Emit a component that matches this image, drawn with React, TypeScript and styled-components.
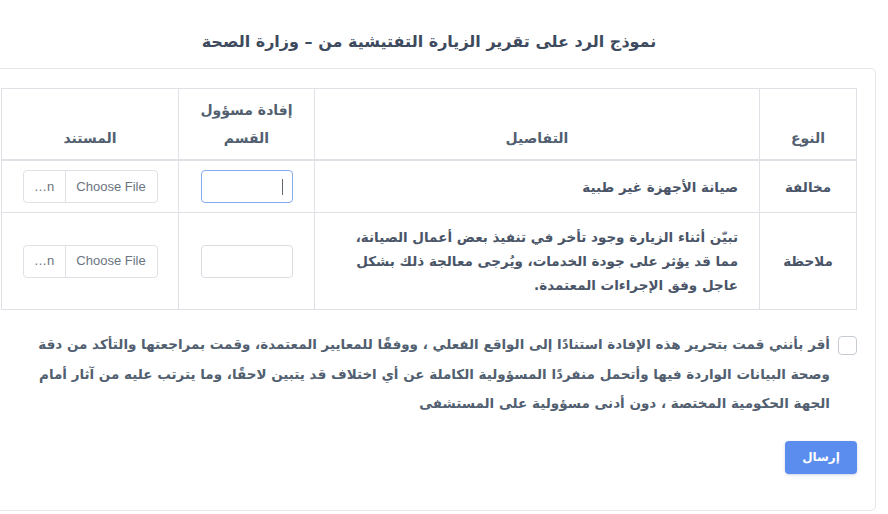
import React from 'react'
import styled, { createGlobalStyle } from 'styled-components'

const GlobalStyle = createGlobalStyle`
  html, body {
    margin: 0;
    padding: 0;
    overflow: hidden;
    background: #ffffff;
  }
  body {
    direction: rtl;
    font-family: "DejaVu Sans", "Noto Sans", sans-serif;
    color: #4a5568;
  }
`

const Page = styled.div`
  width: 894px;
  margin-right: 12px;
  padding-top: 28px;
`

const Title = styled.h1`
  margin: 0 0 12px;
  height: 28px;
  line-height: 28px;
  text-align: center;
  font-size: 16px;
  font-weight: 700;
  color: #3e4a5e;
`

const Card = styled.div`
  box-sizing: border-box;
  height: 443px;
  border: 1px solid #e3e6ea;
  border-radius: 5px;
  padding: 19px 18px;
`

const Table = styled.table`
  width: 856px;
  border-collapse: collapse;
  table-layout: fixed;
  border: 1px solid #dee2e6;
`

const Row = styled.tr<{ $h: number }>`
  height: ${p => p.$h}px;
`

const Th = styled.th<{ $w?: number }>`
  box-sizing: border-box;
  width: ${p => (p.$w ? `${p.$w}px` : 'auto')};
  border: 1px solid #dee2e6;
  border-bottom: 2px solid #dee2e6;
  padding: 7px 14px;
  vertical-align: bottom;
  text-align: center;
  font-size: 14px;
  font-weight: 700;
  line-height: 28px;
  color: #525f70;
`

const Td = styled.td<{ $align?: 'center' | 'right' }>`
  border: 1px solid #dee2e6;
  padding: ${p => (p.$align === 'right' ? '9px 21px 9px 12px' : '9px 12px')};
  vertical-align: middle;
  text-align: ${p => p.$align ?? 'center'};
  font-size: 13.5px;
  font-weight: 700;
  line-height: 24px;
  color: #4a5568;
`

const Field = styled.div`
  position: relative;
  width: 92px;
  margin: 0 auto;
`

const TextInput = styled.input<{ $focused?: boolean }>`
  box-sizing: border-box;
  display: block;
  width: 92px;
  height: 33px;
  border: 1px solid ${p => (p.$focused ? '#86a9ef' : '#d9dde2')};
  border-radius: 4px;
  background: #fff;
  outline: none;
`

const Caret = styled.span`
  position: absolute;
  top: 9px;
  right: 10px;
  width: 1px;
  height: 16px;
  background: #5f6670;
`

const FileBox = styled.div`
  display: flex;
  width: 135px;
  height: 33px;
  box-sizing: border-box;
  border: 1px solid #dee2e6;
  border-radius: 4px;
  margin: 0 auto;
  overflow: hidden;
  font-family: "Liberation Sans", Arial, sans-serif;
  font-size: 13px;
  font-weight: 400;
  color: #6b7480;
`

const FileButton = styled.span`
  width: 91px;
  display: flex;
  align-items: center;
  justify-content: center;
  border-left: 1px solid #dee2e6;
`

const FileName = styled.span`
  flex: 1;
  display: flex;
  align-items: center;
  justify-content: center;
  direction: ltr;
  unicode-bidi: isolate;
`

const Consent = styled.label`
  display: flex;
  gap: 8px;
  align-items: flex-start;
  margin-top: 26px;
`

const Box = styled.span`
  flex: none;
  width: 19px;
  height: 19px;
  box-sizing: border-box;
  border: 1px solid #c6cbd2;
  border-radius: 4px;
`

const ConsentText = styled.p`
  margin: -6px 0 0;
  font-size: 13.5px;
  font-weight: 700;
  line-height: 29.5px;
  color: #525f70;
  white-space: nowrap;
`

const Actions = styled.div`
  display: flex;
  margin-top: 22px;
`

const SubmitButton = styled.button`
  width: 72px;
  height: 33px;
  border: none;
  border-radius: 4px;
  background: #5b8def;
  box-shadow: 0 1px 3px rgba(50, 80, 140, 0.25);
  color: #ffffff;
  font-family: inherit;
  font-size: 12px;
  font-weight: 700;
`

type Item = { kind: string; lines: string[]; focused?: boolean; h: number }

const items: Item[] = [
  { kind: 'مخالفة', lines: ['صيانة الأجهزة غير طبية'], focused: true, h: 52 },
  {
    kind: 'ملاحظة',
    lines: [
      'تبيّن أثناء الزيارة وجود تأخر في تنفيذ بعض أعمال الصيانة،',
      'مما قد يؤثر على جودة الخدمات، ويُرجى معالجة ذلك بشكل',
      'عاجل وفق الإجراءات المعتمدة.',
    ],
    h: 97,
  },
]

export default function App() {
  return (
    <>
      <GlobalStyle />
      <Page>
        <Title>نموذج الرد على تقرير الزيارة التفتيشية من – وزارة الصحة</Title>
        <Card>
          <Table>
            <thead>
              <Row $h={70}>
                <Th $w={97}>النوع</Th>
                <Th $w={445}>التفاصيل</Th>
                <Th $w={136}>إفادة مسؤول القسم</Th>
                <Th>المستند</Th>
              </Row>
            </thead>
            <tbody>
              {items.map(item => (
                <Row key={item.kind} $h={item.h}>
                  <Td>{item.kind}</Td>
                  <Td $align="right">
                    {item.lines.map((line, i) => (
                      <React.Fragment key={i}>
                        {i > 0 && <br />}
                        {line}
                      </React.Fragment>
                    ))}
                  </Td>
                  <Td>
                    <Field>
                      <TextInput $focused={item.focused} />
                      {item.focused && <Caret />}
                    </Field>
                  </Td>
                  <Td>
                    <FileBox>
                      <FileButton>Choose File</FileButton>
                      <FileName>…n</FileName>
                    </FileBox>
                  </Td>
                </Row>
              ))}
            </tbody>
          </Table>

          <Consent>
            <Box />
            <ConsentText>
              أقر بأنني قمت بتحرير هذه الإفادة استنادًا إلى الواقع الفعلي ، ووفقًا للمعايير المعتمدة، وقمت بمراجعتها والتأكد من دقة
              <br />
              وصحة البيانات الواردة فيها وأتحمل منفردًا المسؤولية الكاملة عن أي اختلاف قد يتبين لاحقًا، وما يترتب عليه من آثار أمام
              <br />
              الجهة الحكومية المختصة ، دون أدنى مسؤولية على المستشفى
            </ConsentText>
          </Consent>

          <Actions>
            <SubmitButton>إرسال</SubmitButton>
          </Actions>
        </Card>
      </Page>
    </>
  )
}
